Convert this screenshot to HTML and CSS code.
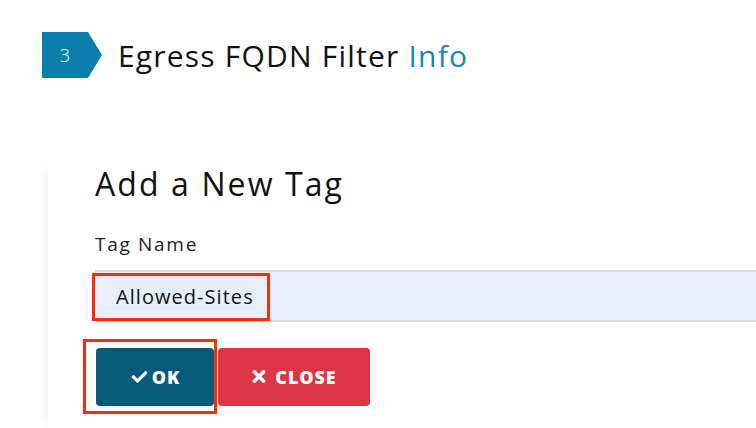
FILE: index.html
```html
<!DOCTYPE html>
<html>
<head>
<meta charset="utf-8">
<link rel="stylesheet" href="styles.css">
</head>
<body>
<div class="header">
  <div class="step"><span class="step-num">3</span><span class="step-arrow"></span></div>
  <h1 class="title">Egress FQDN Filter <span class="info">Info</span></h1>
</div>
<div class="card">
  <h2 class="card-title">Add a New Tag</h2>
  <label class="label">Tag Name</label>
  <div class="input">
    <span class="input-value">Allowed-Sites</span>
    <span class="hl hl-input"></span>
  </div>
  <div class="actions">
    <div class="ok-wrap">
      <button class="btn btn-ok"><svg class="ico" viewBox="0 0 512 512" width="19" height="16"><path fill="#fff" d="M173.9 439.4L7.5 273c-10-10-10-26.2 0-36.2l36.2-36.2c10-10 26.2-10 36.2 0L192 312.7 432.1 72.6c10-10 26.2-10 36.2 0l36.2 36.2c10 10 10 26.2 0 36.2L210.1 439.4c-10 10-26.2 10-36.2 0z"/></svg>OK</button>
    </div>
    <button class="btn btn-close"><svg class="ico" viewBox="0 0 352 512" width="16" height="19"><path fill="#fff" d="M242.7 256l100.1-100.1c12.3-12.3 12.3-32.2 0-44.5l-22.2-22.2c-12.3-12.3-32.2-12.3-44.5 0L176 189.3 75.9 89.2c-12.3-12.3-32.2-12.3-44.5 0L9.2 111.4c-12.3 12.3-12.3 32.2 0 44.5L109.3 256 9.2 356.1c-12.3 12.3-12.3 32.2 0 44.5l22.2 22.2c12.3 12.3 32.2 12.3 44.5 0L176 322.7l100.1 100.1c12.3 12.3 32.2 12.3 44.5 0l22.2-22.2c12.3-12.3 12.3-32.2 0-44.5L242.7 256z"/></svg>CLOSE</button>
  </div>
</div>
</body>
</html>
```
FILE: styles.css
```css
html, body {
  margin: 0;
  padding: 0;
  background: #fff;
  font-family: "Open Sans", "Noto Sans", sans-serif;
  color: #111;
  overflow: hidden;
  width: 756px;
  height: 428px;
}
.header {
  display: flex;
  align-items: center;
  padding: 32px 0 0 42px;
  height: 46px;
}
.step {
  display: flex;
  height: 46px;
}
.step-num {
  width: 46px;
  height: 46px;
  background: #0a7fab;
  color: #fff;
  font-size: 18px;
  font-weight: 300;
  display: flex;
  align-items: center;
  justify-content: center;
}
.step-arrow {
  width: 0;
  height: 0;
  border-top: 23px solid transparent;
  border-bottom: 23px solid transparent;
  border-left: 14px solid #0a7fab;
}
.title {
  margin: 0 0 0 16px;
  font-size: 30px;
  font-weight: 400;
  color: #111;
  letter-spacing: 1.2px;
}
.info { color: #1a86b8; }
.card {
  margin: 86px 0 0 48px;
  padding: 0 0 0 47px;
  box-shadow: -6px 0 8px -4px rgba(0,0,0,0.06);
  height: 264px;
}
.card-title {
  margin: 0;
  font-size: 32px;
  font-weight: 400;
  line-height: 40px;
  color: #111;
  letter-spacing: 2.1px;
}
.label {
  display: block;
  margin-top: 28px;
  font-size: 19px;
  line-height: 24px;
  color: #222;
  letter-spacing: 1.7px;
}
.input {
  position: relative;
  margin-top: 14px;
  height: 48px;
  background: #e6effd;
  border-top: 2px solid #dcdcdc;
  border-bottom: 2px solid #dcdcdc;
  display: flex;
  align-items: center;
  padding-left: 21px;
}
.input-value {
  font-size: 20px;
  color: #111;
  letter-spacing: 1.05px;
}
.hl {
  position: absolute;
  border: 3px solid #ff2a00;
}
.hl-input {
  left: -3px;
  top: 1px;
  width: 172px;
  height: 42px;
}
.actions {
  display: flex;
  align-items: center;
  margin-top: 17px;
}
.ok-wrap {
  border: 3px solid #ff2a00;
  padding: 6px 0 5px 10px;
  margin-left: -12px;
}
.btn {
  height: 58px;
  border: none;
  border-radius: 4px;
  color: #fff;
  font-family: "Open Sans", sans-serif;
  font-weight: 800;
  font-size: 18px;
  display: flex;
  align-items: center;
  justify-content: center;
  gap: 3px;
  padding: 0;
  letter-spacing: 0.9px;
}
.btn-ok {
  width: 118px;
  background: #055a7a;
}
.btn-close {
  width: 152px;
  background: #dc3545;
  gap: 8px;
  margin-left: 1px;
}
.ico { display: block; }
```
